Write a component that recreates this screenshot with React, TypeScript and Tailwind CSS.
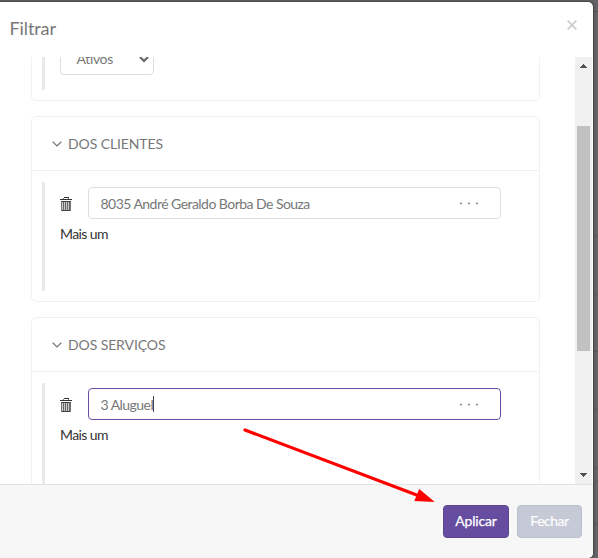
import React from "react";

function Trash() {
  return (
    <svg width="12" height="14" viewBox="0 0 12 14" className="mt-0.5 block shrink-0" shapeRendering="crispEdges">
      <rect x="4" y="0" width="5" height="1" fill="#333" />
      <rect x="3" y="1" width="1" height="1" fill="#777" />
      <rect x="8" y="1" width="1" height="1" fill="#777" />
      <rect x="0" y="2" width="12" height="1" fill="#333" />
      <rect x="1" y="4" width="10" height="10" fill="#c9c9c9" />
      <path d="M1.5 4v10M10.5 4v10" stroke="#777" />
      <path d="M3.5 4v9M5.5 4v9M7.5 4v9M9.5 4v9" stroke="#666" />
      <path d="M1 4.5h10M2 13.5h8" stroke="#444" />
    </svg>
  );
}

function Ellipsis() {
  return (
    <svg width="20" height="4" viewBox="0 0 20 4" className="block" fill="#8d8d8d">
      <circle cx="2" cy="2.5" r="1.1" />
      <circle cx="10" cy="2.5" r="1.1" />
      <circle cx="18" cy="2.5" r="1.1" />
    </svg>
  );
}

type SectionProps = { title: string; value: string; focused?: boolean };

function Section({ title, value, focused }: SectionProps) {
  return (
    <section className="h-[186px] shrink-0 rounded-[5px] border border-[#eff1f5]">
      <header className="flex h-[54px] items-center border-b border-[#eff1f5] pl-5">
        <svg width="10" height="6" viewBox="0 0 10 6" className="mr-1.5 block" fill="none" stroke="#777" strokeWidth="1.3">
          <path d="M0.7 0.7 5 4.9 9.3 0.7" />
        </svg>
        <h2 className="text-[14px] leading-5 tracking-[-0.1px] text-[#777]">{title}</h2>
      </header>
      <div className="ml-2.5 mt-[11px] h-[109px] border-l-[3px] border-[#e9e9e9] pl-[15px] pt-[5px]">
        <div className="flex items-center">
          <Trash />
          <div
            className={`ml-4 flex h-8 w-[413px] items-center rounded-[4px] border pl-[11.5px] pr-[21px] text-[14px] text-[#777] ${
              focused ? "border-[#674d9f]" : "border-[#dedede]"
            }`}
          >
            <span className="tracking-[-0.54px]">{value}</span>
            {focused && <span className="h-[16px] w-px bg-[#444]" />}
            <span className="ml-auto">
              <Ellipsis />
            </span>
          </div>
        </div>
        <div className="mt-[5px] text-[14px] leading-5 tracking-[-0.6px] text-[#333]">Mais um</div>
      </div>
    </section>
  );
}

export default function App() {
  return (
    <div
      className="relative h-[558px] w-[598px] overflow-hidden bg-[#646466] pt-[2px]"
      style={{ fontFamily: 'Lato, "Liberation Sans", sans-serif' }}
    >
      <div className="absolute right-0 top-0 h-full w-[5px] bg-[#646466]">
        <div className="mt-[11px] h-px bg-[#545456]" />
        <div className="mt-[224px] h-px bg-[#58585a]" />
        <div className="mt-[57px] h-px bg-[#58585a]" />
        <div className="mt-[56px] h-px bg-[#58585a]" />
        <div className="mt-[57px] h-px bg-[#58585a]" />
        <div className="mt-[57px] h-px bg-[#58585a]" />
        <div className="mt-[56px] h-px bg-[#58585a]" />
      </div>
      <div className="relative flex h-[556px] w-[593px] flex-col overflow-hidden rounded-r-[5px] bg-white shadow-[0_0_2px_1px_#414141]">
        <header className="flex h-[55px] shrink-0 justify-between pl-[9.5px] pr-4">
          <h1 className="mt-[14px] text-[18px] leading-6 tracking-[-0.1px] text-[#777]">Filtrar</h1>
          <svg width="10" height="10" viewBox="0 0 10 10" className="mt-[18px] block" stroke="#ccc" strokeWidth="1.8">
            <path d="M.7.7 9.3 9.3M9.3.7.7 9.3" />
          </svg>
        </header>

        <div className="flex h-[427px] shrink-0 overflow-hidden pr-px">
          <main className="flex w-[575px] shrink-0 flex-col gap-[15px] pl-[31px] pr-[35px]">
            <section className="flex h-[44px] shrink-0 items-start rounded-b-[5px] border border-t-0 border-[#eff1f5] pl-2.5">
              <div className="h-[33px] border-l-[3px] border-[#e9e9e9] pl-[15px]">
                <div className="h-[18px] w-[94px] overflow-hidden">
                  <div className="-mt-[14px] flex h-8 items-center justify-between rounded-[4px] border border-[#dedede] pb-0.5 pl-[15.5px] pr-1 text-[14px] text-[#777]">
                    <span className="tracking-[-0.35px]">Ativos</span>
                    <svg width="10" height="7" viewBox="0 0 10 7" className="mt-0.5" fill="none" stroke="#666" strokeWidth="2.2">
                      <path d="M1 1l4 4 4-4" />
                    </svg>
                  </div>
                </div>
              </div>
            </section>
            <Section title="DOS CLIENTES" value="8035 André Geraldo Borba De Souza" />
            <Section title="DOS SERVIÇOS" value="3 Aluguel" focused />
          </main>
          <div className="flex w-[17px] shrink-0 flex-col items-center bg-[#f0f0f0]">
            <svg width="7" height="4" viewBox="0 0 7 4" className="mt-[7px] block shrink-0" fill="#505050" shapeRendering="crispEdges">
              <path d="M3 0h1v1h1v1h1v1h1v1H0V3h1V2h1V1h1z" />
            </svg>
            <div className="mt-[58px] h-[225px] w-[13px] shrink-0 bg-[#c1c1c1]" />
            <svg width="7" height="4" viewBox="0 0 7 4" className="mb-[7px] mt-auto block shrink-0" fill="#505050" shapeRendering="crispEdges">
              <path d="M0 0h7v1H6v1H5v1H4v1H3V3H2V2H1V1H0z" />
            </svg>
          </div>
        </div>

        <footer className="flex flex-1 items-start justify-end gap-2 border-t border-[#e3e3e3] bg-[#f7f7f7] pr-[11px] pt-5 text-[14px] text-white">
          <button className="h-[33px] w-[66px] rounded-[4px] border border-[#5d4590] bg-[#674d9f] pb-0.5 tracking-[-0.2px] [-webkit-text-stroke:0.25px_white]">
            Aplicar
          </button>
          <button className="h-[33px] w-[65px] rounded-[4px] border border-[#b9bfcd] bg-[#c6cad6] pb-0.5 tracking-[-0.5px] [-webkit-text-stroke:0.15px_white]">
            Fechar
          </button>
        </footer>
      </div>

      <svg className="pointer-events-none absolute left-[240px] top-[425px]" width="200" height="82" viewBox="0 0 200 82">
        <path d="M5 5 178 70.5" stroke="#f00" strokeWidth="3.2" strokeLinecap="round" />
        <path d="M179.2 64 174.3 76 194.8 76.9z" fill="#f00" />
      </svg>
    </div>
  );
}
